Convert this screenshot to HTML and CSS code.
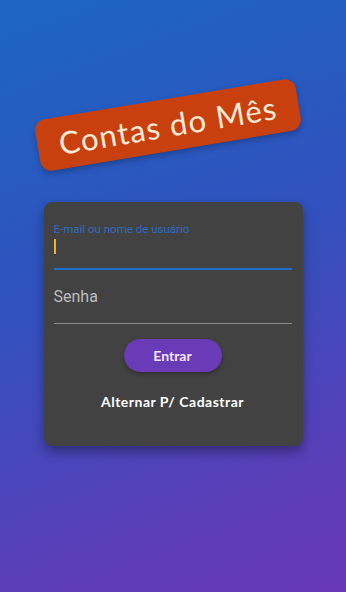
FILE: index.html
```html
<!DOCTYPE html>
<html>
<head>
  <title>Contas do Mês</title>
  <link rel="stylesheet" href="styles.css">
</head>
<body>
  <div class="screen">
    <div class="badge">Contas do Mês</div>

    <div class="card">
      <div class="field active">
        <label>E-mail ou nome de usuário</label>
        <div class="input"><span class="cursor"></span></div>
      </div>
      <div class="field">
        <div class="input placeholder">Senha</div>
      </div>
      <button class="btn">Entrar</button>
      <div class="switch">Alternar P/ Cadastrar</div>
    </div>
  </div>
</body>
</html>
```

FILE: styles.css
```css
html, body {
  margin: 0;
  height: 100%;
}
body {
  font-family: "Lato", "Noto Sans", sans-serif;
}
.screen {
  width: 346px;
  height: 592px;
  background: linear-gradient(160deg, #1c66c2 0%, #3151be 45%, #5e3db8 85%, #6637b6 100%);
  display: flex;
  flex-direction: column;
  align-items: center;
  overflow: hidden;
}
.badge {
  margin-top: 99px;
  width: 264px;
  height: 52px;
  border-radius: 11px;
  background-color: #c9400f;
  color: #fdebd8;
  font-size: 31px;
  display: flex;
  align-items: center;
  justify-content: center;
  transform: translateX(-5px) rotate(-9.5deg);
  box-shadow: 0 3px 6px rgba(0, 0, 0, 0.25);
  letter-spacing: 1.3px;
}
.card {
  margin-top: 51px;
  width: 259px;
  height: 244px;
  box-sizing: border-box;
  background-color: #424242;
  border-radius: 8px;
  padding: 20px 11px 0 10px;
  box-shadow: 0 6px 12px rgba(0, 0, 0, 0.35);
  display: flex;
  flex-direction: column;
}
.field label {
  display: block;
  font-family: "Roboto", sans-serif;
  font-size: 11.5px;
  color: #2e6cc0;
  line-height: 14px;
}
.input {
  height: 28px;
  border-bottom: 1px solid #8a8a8a;
  font-family: "Roboto", sans-serif;
  position: relative;
}
.field.active .input {
  height: 32px;
  border-bottom: 2px solid #1f6ec9;
}
.cursor {
  position: absolute;
  left: 0;
  top: 3px;
  width: 2px;
  height: 15px;
  background-color: #e8b530;
}
.placeholder {
  margin-top: 14px;
  font-size: 16px;
  color: #bdbdbd;
  height: 40px;
  box-sizing: border-box;
  padding-top: 3px;
}
.btn {
  align-self: center;
  margin-top: 15px;
  width: 98px;
  height: 33px;
  border: none;
  border-radius: 17px;
  background-color: #6a3bb7;
  color: #f1e4fb;
  font-family: "Lato", sans-serif;
  font-weight: bold;
  font-size: 14px;
  box-shadow: 0 2px 4px rgba(0, 0, 0, 0.3);
}
.switch {
  margin-top: 21px;
  text-align: center;
  color: #ffffff;
  font-weight: bold;
  font-size: 14px;
  letter-spacing: 0.5px;
}
```
